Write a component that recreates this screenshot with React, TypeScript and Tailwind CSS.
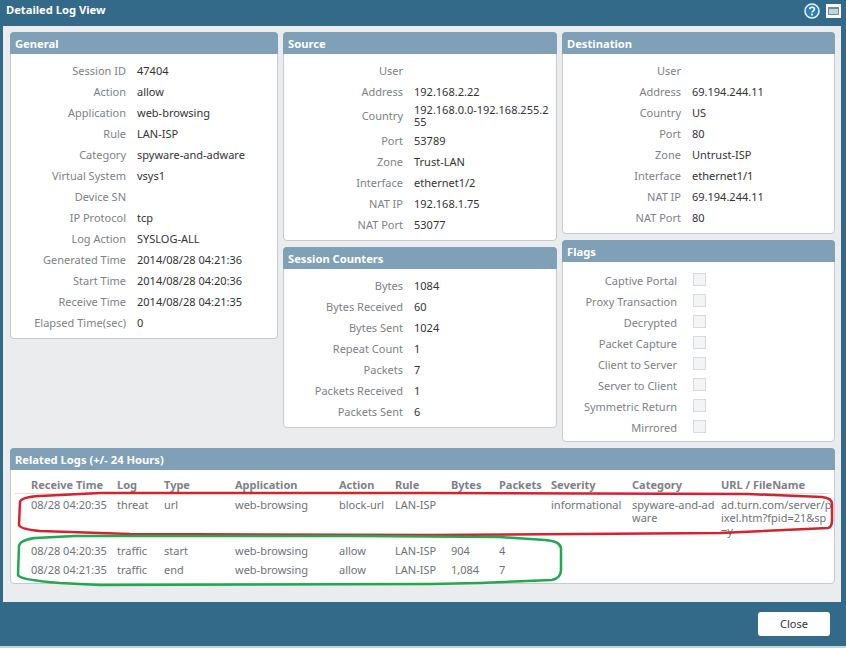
const general = [
  ["Session ID", "47404"],
  ["Action", "allow"],
  ["Application", "web-browsing"],
  ["Rule", "LAN-ISP"],
  ["Category", "spyware-and-adware"],
  ["Virtual System", "vsys1"],
  ["Device SN", ""],
  ["IP Protocol", "tcp"],
  ["Log Action", "SYSLOG-ALL"],
  ["Generated Time", "2014/08/28 04:21:36"],
  ["Start Time", "2014/08/28 04:20:36"],
  ["Receive Time", "2014/08/28 04:21:35"],
  ["Elapsed Time(sec)", "0"],
];

const source = [
  ["User", ""],
  ["Address", "192.168.2.22"],
  ["Country", "192.168.0.0-192.168.255.255"],
  ["Port", "53789"],
  ["Zone", "Trust-LAN"],
  ["Interface", "ethernet1/2"],
  ["NAT IP", "192.168.1.75"],
  ["NAT Port", "53077"],
];

const counters = [
  ["Bytes", "1084"],
  ["Bytes Received", "60"],
  ["Bytes Sent", "1024"],
  ["Repeat Count", "1"],
  ["Packets", "7"],
  ["Packets Received", "1"],
  ["Packets Sent", "6"],
];

const destination = [
  ["User", ""],
  ["Address", "69.194.244.11"],
  ["Country", "US"],
  ["Port", "80"],
  ["Zone", "Untrust-ISP"],
  ["Interface", "ethernet1/1"],
  ["NAT IP", "69.194.244.11"],
  ["NAT Port", "80"],
];

const flags = [
  "Captive Portal",
  "Proxy Transaction",
  "Decrypted",
  "Packet Capture",
  "Client to Server",
  "Server to Client",
  "Symmetric Return",
  "Mirrored",
];

const columns = [
  { name: "Receive Time", width: "w-[102px] pl-4" },
  { name: "Log", width: "w-[47px]" },
  { name: "Type", width: "w-[71px]" },
  { name: "Application", width: "w-[104px]" },
  { name: "Action", width: "w-[56px]" },
  { name: "Rule", width: "w-[56px]" },
  { name: "Bytes", width: "w-[48px]" },
  { name: "Packets", width: "w-[52px]" },
  { name: "Severity", width: "w-[81px]" },
  { name: "Category", width: "w-[89px]" },
  { name: "URL / FileName", width: "" },
];

const logs = [
  {
    rowClass: "h-[47px]",
    cells: [
      "08/28 04:20:35",
      "threat",
      "url",
      "web-browsing",
      "block-url",
      "LAN-ISP",
      "",
      "",
      "informational",
      "spyware-and-adware",
      "ad.turn.com/server/p\nixel.htm?fpid=21&sp\n=y",
    ],
  },
  {
    rowClass: "h-[19px]",
    cells: ["08/28 04:20:35", "traffic", "start", "web-browsing", "allow", "LAN-ISP", "904", "4", "", "", ""],
  },
  {
    rowClass: "h-[19px]",
    cells: ["08/28 04:21:35", "traffic", "end", "web-browsing", "allow", "LAN-ISP", "1,084", "7", "", "", ""],
  },
];

function Panel({ title, className, children }: { title: string; className?: string; children: React.ReactNode }) {
  return (
    <div className={`rounded-[4px] border border-[#c6cacd] bg-white ${className ?? ""}`}>
      <div className="-mx-px -mt-px h-[22px] rounded-t-[4px] bg-[#7fa0b6] pt-px pl-[5px] text-[11.2px] leading-[22px] font-bold text-white">
        {title}
      </div>
      {children}
    </div>
  );
}

function Fields({ rows, labelWidth }: { rows: string[][]; labelWidth: string }) {
  return (
    <div className="pt-[6px] pb-[5px]">
      {rows.map(([label, value]) => (
        <div key={label} className="flex min-h-[21px] items-center gap-[11px] leading-[12px]">
          <div className={`shrink-0 text-right text-[#7d8186] ${labelWidth}`}>{label}</div>
          <div className="w-[136px] py-[2px] break-all text-[#333]">{value}</div>
        </div>
      ))}
    </div>
  );
}

function Annotations() {
  return (
    <svg className="pointer-events-none absolute top-0 left-0" width="846" height="648" fill="none" strokeWidth="2.5">
      <path
        stroke="#d2232f"
        d="M100 493 L40 496 Q21 497 20 502 L19 525 Q20 529 40 531 L130 534 L430 535 L720 533 L828 528 Q832 527 832 520 L832 504 Q832 498 822 497 L747 494 L430 493 Z"
      />
      <path
        stroke="#22a84f"
        d="M75 536 L35 538 Q20 540 19 546 L18 575 Q20 580 60 583 L100 585 L430 584 L480 583 L552 580 Q561 578 561 570 L561 548 Q560 541 545 540 L500 537 L360 536 Z"
      />
    </svg>
  );
}

export default function App() {
  return (
    <div className="relative flex h-[648px] w-[846px] flex-col overflow-hidden bg-[#336a8a] font-['Noto_Sans',sans-serif] text-[11px]">
      {/* Title bar */}
      <div className="flex h-[26px] shrink-0 items-start justify-between pt-[3px] pr-[5px] pl-[6px]">
        <div className="text-[11.2px] leading-[13px] font-bold text-white">Detailed Log View</div>
        <div className="flex items-center gap-[6px]">
          <svg width="16" height="16" viewBox="0 0 16 16">
            <circle cx="8" cy="8" r="7" fill="#2b80b9" stroke="#e6f0f6" strokeWidth="1.6" />
            <path d="M5.7 6.2 C5.9 3.6 10.4 3.6 10.4 6.2 C10.4 7.9 8 7.8 8 9.6" fill="none" stroke="#fff" strokeWidth="1.7" />
            <rect x="7.1" y="10.6" width="1.8" height="1.8" fill="#fff" />
          </svg>
          <div className="flex h-[14px] w-[15px] items-center justify-center bg-white">
            <div className="h-[8px] w-[11px] border border-t-2 border-[#6d8ba0] bg-[#c5d3dd]" />
          </div>
        </div>
      </div>

      {/* Dialog body */}
      <div className="mr-[5px] ml-[3px] h-[576px] shrink-0 bg-[#ebecee] pt-[6px] pl-[7px]">
        <div className="flex items-start gap-[5px]">
          <Panel title="General" className="w-[268px]">
            <Fields rows={general} labelWidth="w-[115px]" />
          </Panel>
          <div className="flex w-[274px] flex-col gap-[6px]">
            <Panel title="Source">
              <Fields rows={source} labelWidth="w-[119px]" />
            </Panel>
            <Panel title="Session Counters">
              <Fields rows={counters} labelWidth="w-[119px]" />
            </Panel>
          </div>
          <div className="flex w-[273px] flex-col gap-[6px]">
            <Panel title="Destination">
              <Fields rows={destination} labelWidth="w-[118px]" />
            </Panel>
            <Panel title="Flags">
              <div className="pt-[9px] pb-[2px]">
                {flags.map((flag) => (
                  <div key={flag} className="flex h-[21px] items-center gap-[16px]">
                    <div className="w-[114px] text-right text-[#7d8186]">{flag}</div>
                    <div className="mb-[4px] h-[13px] w-[13px] border border-[#d8dadc] bg-[#f3f4f5]" />
                  </div>
                ))}
              </div>
            </Panel>
          </div>
        </div>

        <Panel title="Related Logs (+/- 24 Hours)" className="mt-[6px] w-[825px]">
          <div className="pr-[4px] pb-[4px] pl-[4px]">
            <table className="w-full table-fixed border-collapse">
              <thead>
                <tr className="h-[23px] border-b border-[#dcdee0]">
                  {columns.map((col) => (
                    <th key={col.name} className={`pt-[8px] pb-[2px] text-left leading-[13px] font-bold text-[#7d8186] ${col.width}`}>
                      {col.name}
                    </th>
                  ))}
                </tr>
              </thead>
              <tbody>
                {logs.map((log, i) => (
                  <tr key={i} className={log.rowClass}>
                    {log.cells.map((cell, j) => (
                      <td
                        key={j}
                        className={`align-top leading-[13px] text-[#6e7277] ${i === 0 ? "pt-[4px]" : "pt-[3px]"} ${j === 0 ? "pl-4" : ""} ${j === 10 ? "whitespace-pre" : "break-all"}`}
                      >
                        {cell}
                      </td>
                    ))}
                  </tr>
                ))}
              </tbody>
            </table>
          </div>
        </Panel>
      </div>

      {/* Footer */}
      <div className="flex h-[44px] shrink-0 items-start justify-end pt-[10px] pr-[16px]">
        <button className="h-[24px] w-[72px] rounded-[3px] bg-white text-[#333]">Close</button>
      </div>
      <div className="h-[2px] shrink-0 bg-[#c9d2d8]" />

      <Annotations />
    </div>
  );
}
